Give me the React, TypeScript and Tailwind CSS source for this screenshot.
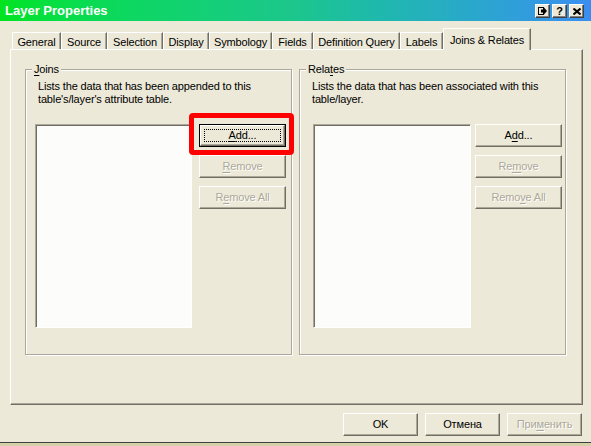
import React from "react";

const FONT = { fontFamily: '"Liberation Sans", Arial, sans-serif' };

const DIS = "text-[#aca899] [text-shadow:1px_1px_0_#ffffff]";

function Btn({
  children,
  w,
  disabled,
  focused,
}: {
  children: React.ReactNode;
  w: number;
  disabled?: boolean;
  focused?: boolean;
}) {
  const inner = (
    <div className="relative w-full h-full border border-t-white border-l-white border-r-[#716f64] border-b-[#716f64] shadow-[inset_-1px_-1px_0_#aca899] bg-[#ece9d8] flex items-center justify-center">
      <span className={disabled ? DIS : "text-black"}>{children}</span>
      {focused && (
        <div className="absolute inset-[3px] border border-dotted border-black pointer-events-none" />
      )}
    </div>
  );
  return (
    <div
      className={`h-[23px] shrink-0 ${focused ? "border border-black" : ""}`}
      style={{ width: w }}
    >
      {inner}
    </div>
  );
}

function U({ children }: { children: React.ReactNode }) {
  return <span className="underline underline-offset-[2px]">{children}</span>;
}

function Group({
  label,
  lines,
  listMl,
  listW,
  gap,
  buttons,
  highlight,
  className,
}: {
  label: React.ReactNode;
  lines: string[];
  listMl: number;
  listW: number;
  gap: number;
  buttons: React.ReactNode[];
  highlight?: boolean;
  className?: string;
}) {
  return (
    <div
      className={`relative w-[267px] h-[286px] border border-[#aca899] shadow-[inset_1px_1px_0_#ffffff,1px_1px_0_#ffffff] ${className ?? ""}`}
    >
      <div className="absolute -top-[7px] left-[6px] px-[2px] bg-[#ece9d8] leading-[13px]">
        {label}
      </div>
      <div className="pt-[10px] pl-[12px] leading-[13px]">
        {lines.map((l, i) => (
          <div key={i}>{l}</div>
        ))}
      </div>
      <div className="flex mt-[18px]">
        <div
          className="h-[204px] shrink-0 bg-[#fcfcfa] border-t border-l border-[#aca899] border-r-white border-b-white border-r border-b shadow-[inset_1px_1px_0_#716f64]"
          style={{ marginLeft: listMl, width: listW }}
        />
        <div className="flex flex-col gap-[8px]" style={{ marginLeft: gap }}>
          {buttons.map((b, i) => (
            <div key={i} className="relative">
              {b}
              {highlight && i === 0 && (
                <div className="absolute -left-[10px] -top-[11px] -right-[8px] -bottom-[8px] border-[5px] border-[#ff0000] rounded-[4px] pointer-events-none" />
              )}
            </div>
          ))}
        </div>
      </div>
    </div>
  );
}

function CapBtn({ children }: { children: React.ReactNode }) {
  return (
    <div className="w-[15px] h-[14px] bg-[#ece9d8] border border-t-white border-l-white border-r-[#404040] border-b-[#404040] shadow-[inset_-1px_-1px_0_#808080] flex items-center justify-center">
      {children}
    </div>
  );
}

const TABS: [string, number][] = [
  ["General", 49],
  ["Source", 46],
  ["Selection", 56],
  ["Display", 46],
  ["Symbology", 63],
  ["Fields", 41],
  ["Definition Query", 87],
  ["Labels", 43],
];

export default function App() {
  return (
    <div
      className="w-[591px] h-[446px] bg-[#ece9d8] text-[11px] tracking-[-0.15px] text-black overflow-hidden flex flex-col"
      style={FONT}
    >
      {/* Title bar */}
      <div className="h-[21px] shrink-0 flex items-center justify-between pl-[5px] pr-[7px] bg-gradient-to-r from-[#02e41c] via-[#1cc68c] to-[#3a8ef0]">
        <span className="text-white font-bold text-[13px] leading-none tracking-normal">
          Layer Properties
        </span>
        <div className="flex gap-[2px] mt-[1px]">
          <CapBtn>
            <svg width="9" height="8" viewBox="0 0 9 8">
              <rect x="0.5" y="0.5" width="5" height="7" fill="none" stroke="#000" />
              <path d="M3 2.5h3v-2l3 3.5-3 3.5v-2H3z" fill="#000" />
            </svg>
          </CapBtn>
          <CapBtn>
            <span className="font-bold text-[11px] leading-none">?</span>
          </CapBtn>
          <CapBtn>
            <svg width="8" height="7" viewBox="0 0 8 7">
              <path d="M0.5 0.5l7 6M7.5 0.5l-7 6" stroke="#000" strokeWidth="2" />
            </svg>
          </CapBtn>
        </div>
      </div>

      {/* Tabs */}
      <div className="flex items-end h-[28px] pl-[12px] shrink-0">
        {TABS.map(([t, w]) => (
          <div
            key={t}
            className="h-[17px] border-t border-l border-white border-r border-r-[#716f64] shadow-[inset_-1px_0_0_#aca899] flex items-center justify-center pt-[2px] shrink-0"
            style={{ width: w }}
          >
            {t}
          </div>
        ))}
        <div className="relative z-10 h-[22px] w-[88px] -mb-[1px] bg-[#ece9d8] border-t border-l border-white border-r border-r-[#716f64] shadow-[inset_-1px_0_0_#aca899] flex items-start justify-center pt-[3px] shrink-0">
          Joins &amp; Relates
        </div>
      </div>

      {/* Panel */}
      <div className="ml-[10px] w-[573px] h-[356px] shrink-0 border-t border-l border-white border-r border-b border-r-[#716f64] border-b-[#716f64] shadow-[inset_-1px_-1px_0_#aca899] flex">
        <Group
          className="ml-[14px] mt-[19px]"
          label={
            <>
              <U>J</U>oins
            </>
          }
          lines={[
            "Lists the data that has been appended to this",
            "table's/layer's attribute table.",
          ]}
          listMl={9}
          listW={157}
          gap={7}
          highlight
          buttons={[
            <Btn w={87} focused>
              <U>A</U>dd...
            </Btn>,
            <Btn w={87} disabled>
              <U>R</U>emove
            </Btn>,
            <Btn w={87} disabled>
              R<U>e</U>move All
            </Btn>,
          ]}
        />
        <Group
          className="ml-[7px] mt-[19px]"
          label={
            <>
              Rela<U>t</U>es
            </>
          }
          lines={[
            "Lists the data that has been associated with this",
            "table/layer.",
          ]}
          listMl={13}
          listW={158}
          gap={4}
          buttons={[
            <Btn w={87}>
              A<U>d</U>d...
            </Btn>,
            <Btn w={87} disabled>
              Re<U>m</U>ove
            </Btn>,
            <Btn w={87} disabled>
              Remo<U>v</U>e All
            </Btn>,
          ]}
        />
      </div>

      {/* Bottom buttons */}
      <div className="flex justify-end gap-[7px] pr-[9px] mt-[8px] shrink-0">
        <Btn w={75}>OK</Btn>
        <Btn w={75}>Отмена</Btn>
        <Btn w={75} disabled>
          При<U>м</U>енить
        </Btn>
      </div>

      <div className="flex-1" />
      <div className="h-[1px] bg-[#404040] shrink-0" />
      <div className="h-[3px] bg-[#d4d0a8] shrink-0" />
    </div>
  );
}
